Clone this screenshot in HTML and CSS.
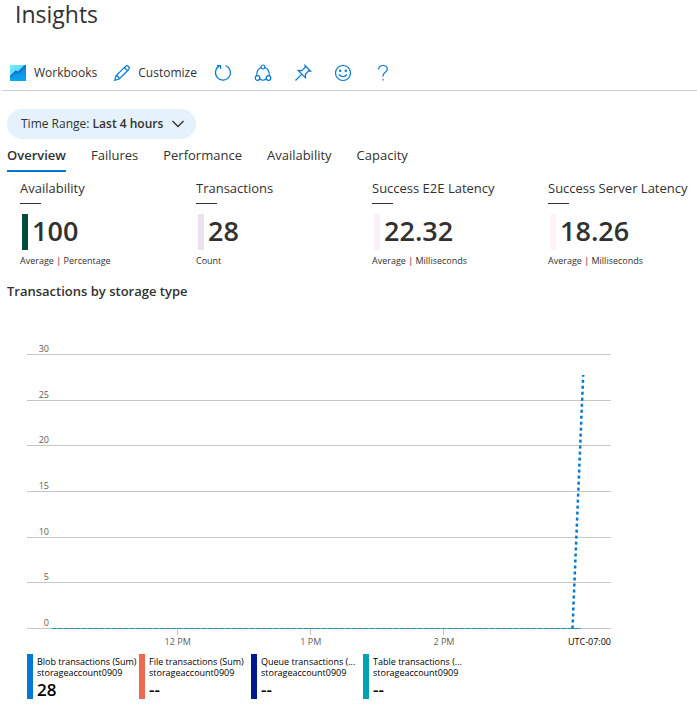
FILE: index.html
```html
<!DOCTYPE html>
<html lang="en">
<head>
<meta charset="utf-8">
<title>Insights</title>
<meta name="viewport" content="width=device-width, initial-scale=1">
<link rel="stylesheet" href="styles.css">
</head>
<body>
<h1 class="title">Insights</h1>
<div class="toolbar">
  <button class="tool">
    <svg width="16" height="16" viewBox="0 0 16 16" aria-hidden="true"><defs><linearGradient id="sky" x1="0" y1="0" x2="1" y2="1"><stop offset="0" stop-color="#7aecff"/><stop offset="1" stop-color="#3cc8f5"/></linearGradient><linearGradient id="sea" x1="0" y1="0" x2="0" y2="1"><stop offset="0" stop-color="#0f86dc"/><stop offset="1" stop-color="#0aa5f2"/></linearGradient></defs><rect width="16" height="16" fill="url(#sky)"/><path d="M0 11 5.500 5.500l2.500 1L15 0h1v16H0z" fill="url(#sea)"/><path d="M0 11 5.500 5.500l2.500 1L15 0h1v2L8.500 9 6 8 0 13z" fill="#1277cf"/></svg>
    <span>Workbooks</span>
  </button>
  <button class="tool">
    <svg class="line" width="16" height="16" viewBox="0 0 16 16" aria-hidden="true"><path d="M.7 15.300 2 10.800 11.500 1.300q1.200-1.200 2.500-.1l.8.800q1.100 1.300-.1 2.500L5.200 14zM2 10.800q2.800.2 3.200 3.200M10.300 2.500l3.200 3.200"/></svg>
    <span>Customize</span>
  </button>
  <span class="icons">
    <button class="tool" aria-label="Refresh"><svg class="line" width="18" height="18" viewBox="0 0 18 18"><path d="M11.500 1.500a7.500 7.500 0 1 1-6 .4M3 1.500h3.500V5"/></svg></button>
    <button class="tool" aria-label="Share"><svg class="line" width="18" height="18" viewBox="0 0 18 18"><circle cx="9" cy="3" r="2"/><circle cx="3.500" cy="14" r="2.300"/><circle cx="14.500" cy="14" r="2.300"/><path d="M7 3.500Q2.500 5.500 2.700 11.700M11 3.500q4.500 2 4.300 8.200M5.800 15q3.200 2.500 6.400 0"/></svg></button>
    <button class="tool" aria-label="Pin"><svg class="line" width="18" height="18" viewBox="0 0 18 18"><path d="m11 1.500 5.500 5.500-2-.2-3.200 3.700.2 3.300L4.200 6.500l3.500.2L11.200 3.500zM7.800 10.200 1.500 16.500"/></svg></button>
    <button class="tool" aria-label="Feedback"><svg class="line" width="18" height="18" viewBox="0 0 18 18"><circle cx="9" cy="9" r="7.500"/><path d="M5 10.500q4 4.500 8 0"/><circle class="dot" cx="6.200" cy="6.800" r=".6"/><circle class="dot" cx="11.800" cy="6.800" r=".6"/></svg></button>
    <button class="tool" aria-label="Help"><svg class="line" width="18" height="18" viewBox="0 0 18 18"><path d="M4.700 5.500Q4.700 1.500 9 1.500T13.300 5q0 2-2.300 3.600T9 12.500M9 15v1.500"/></svg></button>
  </span>
</div>

<main class="content">
  <button class="pill"><span>Time Range: <b>Last 4 hours</b></span>
    <svg width="12" height="8" viewBox="0 0 12 8" aria-hidden="true"><path d="m.5 1 5.500 5.500L11.500 1"/></svg>
  </button>

  <nav class="tabs">
    <a class="tab active" href="#overview">Overview</a>
    <a class="tab" href="#failures">Failures</a>
    <a class="tab" href="#performance">Performance</a>
    <a class="tab" href="#availability">Availability</a>
    <a class="tab" href="#capacity">Capacity</a>
  </nav>

  <section class="tiles">
    <article class="tile"><h2>Availability</h2><p class="figure green">100</p><p class="unit">Average | Percentage</p></article>
    <article class="tile"><h2>Transactions</h2><p class="figure lilac">28</p><p class="unit">Count</p></article>
    <article class="tile"><h2>Success E2E Latency</h2><p class="figure pink">22.32</p><p class="unit">Average | Milliseconds</p></article>
    <article class="tile"><h2>Success Server Latency</h2><p class="figure rose">18.26</p><p class="unit">Average | Milliseconds</p></article>
  </section>

  <h2 class="chart-title">Transactions by storage type</h2>
  <section class="chart">
    <div class="plot">
      <div class="row"><span>30</span></div>
      <div class="row"><span>25</span></div>
      <div class="row"><span>20</span></div>
      <div class="row"><span>15</span></div>
      <div class="row"><span>10</span></div>
      <div class="row"><span>5</span></div>
      <div class="row"><span>0</span></div>
      <svg class="series" viewBox="0 0 584 295" preserveAspectRatio="none" aria-hidden="true">
        <path class="base" d="M25 294.500H554"/>
        <path class="dashes" d="M25 294.500H554"/>
        <path class="blob" d="M545.500 294.500 556.200 41"/>
      </svg>
    </div>
    <div class="axis">
      <span class="tick">12 PM</span>
      <span class="tick">1 PM</span>
      <span class="tick">2 PM</span>
      <span class="zone">UTC-07:00</span>
    </div>
    <ul class="legend">
      <li class="key blob-key"><span>Blob transactions (Sum)</span><span>storageaccount0909</span><strong>28</strong></li>
      <li class="key file-key"><span>File transactions (Sum)</span><span>storageaccount0909</span><strong>--</strong></li>
      <li class="key queue-key"><span>Queue transactions (...</span><span>storageaccount0909</span><strong>--</strong></li>
      <li class="key table-key"><span>Table transactions (...</span><span>storageaccount0909</span><strong>--</strong></li>
    </ul>
  </section>
</main>
</body>
</html>
```
FILE: styles.css
```css
* { box-sizing: border-box; }
body {
  margin: 0;
  background: #fff;
  color: #323130;
  font: 13px/18px "Open Sans", "Noto Sans", sans-serif;
}
h1, h2, p, ul { margin: 0; padding: 0; font-weight: 400; }
button { border: 0; background: none; padding: 0; color: inherit; font: inherit; cursor: pointer; }

.title { padding: 0 15px; font-size: 23px; line-height: 28px; }

.toolbar {
  display: flex;
  align-items: center;
  gap: 17px;
  height: 36px;
  margin: 27px 0 0 2px;
  padding-left: 8px;
  border-bottom: 1px solid #d2d0ce;
  font-size: 12px;
}
.tool { display: flex; align-items: center; gap: 8px; }
.icons { display: flex; gap: 22px; }
.line { fill: none; stroke: #0078d4; stroke-width: 1.2; }
.line .dot { fill: #0078d4; }

.content { padding: 18px 0 8px 7px; }
.pill {
  display: flex;
  align-items: center;
  gap: 9px;
  height: 30px;
  padding: 0 12px 0 14px;
  border-radius: 15px;
  background: #e5f1fb;
  font-size: 12px;
}
.pill b, .tab.active { font-weight: 600; }
.pill svg { fill: none; stroke: #323130; stroke-width: 1.3; }

.tabs { display: flex; gap: 25px; height: 33px; }
.tab { padding-top: 7px; border-bottom: 2px solid transparent; color: inherit; text-decoration: none; }
.tab.active { border-color: #0078d4; }

.tiles { display: grid; grid-template-columns: repeat(4, 1fr); padding: 7px 0 0 13px; margin-right: -27px; }
.tile h2 { font-size: 13px; line-height: 18px; }
.tile h2::after { content: ""; display: block; width: 21px; height: 1px; margin-top: 6px; background: #323130; }
.figure {
  margin: 10px 0 0 2px;
  padding: 0 0 2px 4px;
  border-left: 6px solid;
  font-size: 27px;
  font-weight: 600;
  line-height: 34px;
}
.figure.green { border-color: #004b3a; }
.figure.lilac { border-color: #ebe1f0; }
.figure.pink { border-color: #fbf0f8; }
.figure.rose { border-color: #fff5f9; }
.unit { margin-top: 4px; font-size: 9px; line-height: 14px; }

.chart-title { margin-top: 14px; font-size: 13px; font-weight: 600; line-height: 18px; }

.chart { margin: 34px 86px 0 20px; }
.plot { position: relative; display: grid; grid-template-rows: 21px repeat(6, 1fr); height: 295px; }
.row {
  display: flex;
  align-items: flex-end;
  border-bottom: 1px solid #c8c6c4;
  color: #605e5c;
  font-size: 9px;
  line-height: 10px;
}
.row span { width: 22px; text-align: right; }
.series { position: absolute; inset: 0; width: 100%; height: 100%; fill: none; }
.base { stroke: #8c8fa8; }
.dashes { stroke: #00a2ad; stroke-dasharray: 4 2; }
.blob { stroke: #0078d4; stroke-width: 2.5; stroke-dasharray: 3 3; }

.axis {
  display: grid;
  grid-template-columns: 144fr 228fr 228fr 228fr 172fr;
  font-size: 9px;
  line-height: 14px;
}
.tick { color: #605e5c; text-align: center; }
.tick:first-child { grid-column: 2; }
.tick::before { content: ""; display: block; width: 1px; height: 6px; margin: 0 auto; background: #c8c6c4; }
.zone { padding-top: 6px; text-align: right; color: #000; }

.legend { display: flex; margin-top: 5px; list-style: none; color: #000; }
.key {
  width: 112px;
  padding: 2px 0 0 4px;
  border-left: 6px solid;
  font-size: 9px;
  line-height: 11px;
  white-space: nowrap;
}
.key span { display: block; color: #000; }
.key strong { display: block; padding-top: 3px; color: #000; font-size: 17px; font-weight: 600; line-height: 18px; }
.blob-key { border-color: #0078d7; }
.file-key { border-color: #ef6950; }
.queue-key { border-color: #00188f; }
.table-key { border-color: #00a2ad; }
```
